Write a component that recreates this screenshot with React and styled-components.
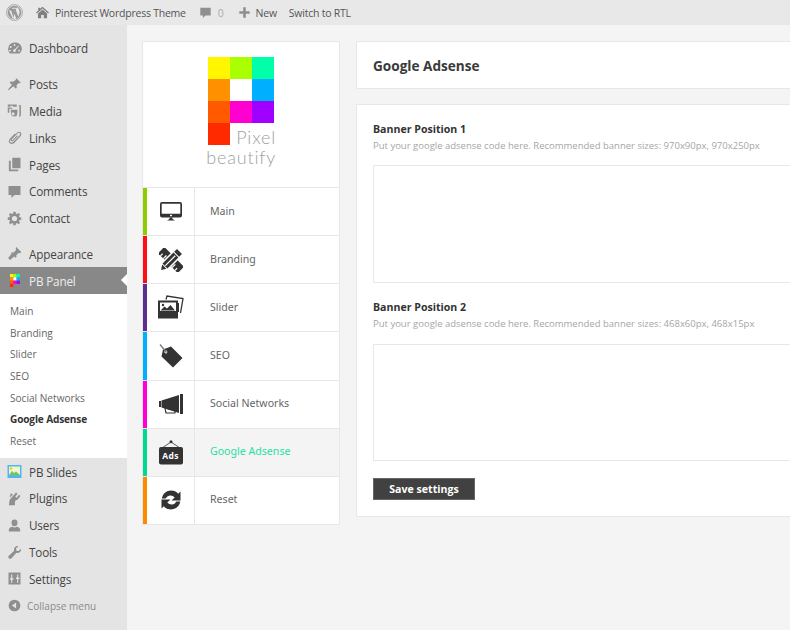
import React from "react";
import styled, { createGlobalStyle } from "styled-components";

const Global = createGlobalStyle`
  html, body { margin: 0; padding: 0; width: 790px; height: 630px; overflow: hidden; background: #f4f4f4; }
  * { box-sizing: border-box; }
  body { font-family: "Open Sans", "Liberation Sans", sans-serif; }
`;

const Page = styled.div`
  width: 790px; height: 630px; overflow: hidden; display: flex; flex-direction: column;
`;
const TopBar = styled.header`
  height: 25px; flex: none; background: #e8e8e8; display: flex; align-items: center;
  font-size: 10.5px; color: #555; padding-left: 6px;
`;
const TopItem = styled.span`
  display: inline-flex; align-items: center; gap: ${p => p.$gap ?? 6}px; margin-left: ${p => p.$ml ?? 0}px;
  color: ${p => p.$muted ? "#aaa" : "#555"}; letter-spacing: -0.23px; white-space: nowrap;
`;
const Body = styled.div`
  flex: 1; display: flex; min-height: 0;
`;
const Side = styled.nav`
  width: 127px; flex: none; background: #e4e4e4; padding-top: 10px; font-size: 11.7px; letter-spacing: -0.15px;
`;
const MenuItem = styled.div`
  height: 26.8px; display: flex; align-items: center; padding-left: 7px; gap: 7px;
  color: #444; margin-top: ${p => p.$mt ?? 0}px; white-space: nowrap;
`;
const IconBox = styled.span`
  width: 15px; height: 16px; display: inline-flex; align-items: center; justify-content: center; flex: none;
  color: #8f8f8f;
`;
const ActiveItem = styled(MenuItem)`
  position: relative; background: #888; color: #eee; height: 26.5px;
  &::after {
    content: ""; position: absolute; right: 0; top: 7px;
    border: 6px solid transparent; border-right-color: #fff; border-left-width: 0;
  }
`;
const SubMenu = styled.div`
  background: #fff; padding: 7px 0 5.6px 10px; display: flex; flex-direction: column; letter-spacing: 0;
`;
const SubItem = styled.div`
  height: 21.7px; line-height: 21px; font-size: 10.1px; white-space: nowrap;
  color: ${p => p.$current ? "#333" : "#666"}; font-weight: ${p => p.$current ? 700 : 400};
  letter-spacing: ${p => p.$current ? "-0.15px" : "0"};
`;
const Collapse = styled(MenuItem)`
  font-size: 10px; color: #8a8a8a; gap: 5px; letter-spacing: 0;
`;
const Main = styled.main`
  flex: 1; min-width: 0; display: flex; gap: 16px; padding: 16px 0 0 15px; align-items: flex-start;
`;
const Card = styled.section`
  background: #fff; border: 1px solid #e7e7e7;
`;
const NavCard = styled(Card)`
  width: 198px; flex: none;
`;
const LogoWrap = styled.div`
  height: 145px; padding: 15px 0 0 65px;
`;
const Logo = styled.div`
  display: grid; grid-template-columns: repeat(3, 22px); grid-auto-rows: 22px; width: 66px; position: relative;
`;
const Cell = styled.i`
  display: block; background: ${p => p.$c};
`;
const LogoText = styled.div`
  position: absolute; right: -2px; font-family: "Lato", sans-serif; font-weight: 300; color: #a0a0a0; white-space: nowrap;
  font-size: 18px; letter-spacing: 0.8px; line-height: 20px; top: ${p => p.$top}px;
`;
const NavRow = styled.div`
  height: 48.15px; display: flex; border-top: 1px solid #e7e7e7;
  background: ${p => p.$active ? "#f4f4f4" : "#fff"};
`;
const Stripe = styled.span`
  width: 4px; flex: none; background: ${p => p.$c};
`;
const NavIcon = styled.span`
  width: 48px; flex: none; border-right: 1px solid #e7e7e7; display: flex; align-items: center; justify-content: center;
  color: #333;
`;
const NavLabel = styled.span`
  padding: 0 0 2px 15px; display: flex; align-items: center; font-size: 10.6px; font-family: "Noto Sans", sans-serif;
  color: ${p => p.$active ? "#1fe0a5" : "#666"}; white-space: nowrap;
`;
const Column = styled.div`
  flex: 1; min-width: 0; display: flex; flex-direction: column; gap: 15px; margin-right: -20px;
`;
const Header = styled(Card)`
  height: 48px; display: flex; align-items: center; padding-left: 16px;
`;
const Title = styled.h1`
  margin: 0; font-size: 13.6px; font-weight: 700; color: #3a3a3a;
`;
const Form = styled(Card)`
  height: 413px; padding: 17px 16px 0;
`;
const FieldTitle = styled.h2`
  margin: 0; font-size: 10.6px; line-height: 14px; font-weight: 700; color: #333;
`;
const FieldHelp = styled.p`
  margin: 3px 0 0; font-size: 9.5px; line-height: 13px; color: #a6a6a6; white-space: nowrap;
`;
const Area = styled.div`
  margin: ${p => p.$mt}px 0 0; height: ${p => p.$h}px; background: #fff; border: 1px solid #e7e7e7;
`;
const Spaced = styled.div`
  margin-top: 17px;
`;
const SaveButton = styled.button`
  margin-top: 17px; width: 102px; height: 22px; border: 1px solid #666; background: #414141; color: #fff;
  font: 700 10.6px "Open Sans", sans-serif; padding: 0; display: block;
`;

const I = ({ children, s = 15, vb = 20 }) => (
  <svg width={s} height={s} viewBox={`0 0 ${vb} ${vb}`} fill="currentColor">{children}</svg>
);

const icons = {
  dash: <path d="M10 2a8.5 8.5 0 0 0-8.5 8.5c0 2.5 1 4.700 2.700 6.300h12.600A8.500 8.500 0 0 0 10 2zm0 2a1.300 1.300 0 1 1 0 2.600A1.300 1.300 0 0 1 10 4zM5 6.800a1.300 1.300 0 1 1 0 2.600 1.300 1.300 0 0 1 0-2.600zm9.800-.6.900.7-4.200 5a1.800 1.800 0 1 1-1-.8zM4 11.500a1.300 1.300 0 1 1 0 2.600 1.300 1.300 0 0 1 0-2.600zm12 0a1.300 1.300 0 1 1 0 2.600 1.300 1.300 0 0 1 0-2.600z" fillRule="evenodd"/>,
  pin: <path d="M12.500 1.500l6 6-1.500.7-1-.5-3.300 3.300.4 3.300-1.300 1.300-3.200-3.200-6.600 5.400-.8-.8 5.400-6.600-3.200-3.200 1.300-1.300 3.300.4L12 3.500l-.4-1z"/>,
  media: <path d="M1 2h12v3H8.500L7.500 3.800H5L4 5H1zm0 4h6v1.500H4a1 1 0 0 0-1 1V13H1zm4 3h9l-.5 6c0 2-1.500 3-4 3s-4-1.200-4-3zm10-6.500h2c1 0 1.500.5 1.500 1.500v12c0 1.500-1 2.500-2.500 2.500l.5-2V4zM9.500 13a2 2 0 1 0 0 3 2 2 0 0 0 0-3z" fillRule="evenodd"/>,
  link: <path d="M13.500 3.200c1.800-1.500 4-1 5 .2s.9 3.300-.5 5L10 17c-2 2-4.500 2.300-6.300.8S2 13.500 3.800 11.500l6.700-7 1 1-6.700 7c-1.200 1.400-1.300 2.800-.2 3.900s2.700.7 4-.6l8-8.500c.9-1.100 1.100-2.300.4-3s-2-.8-3 .2l-7.400 7.700c-.4.500-.5 1-.2 1.300s.8.200 1.200-.2l6-6.300 1 1-6 6.300c-1 1-2.300 1.200-3.200.3s-.8-2.200.2-3.300z"/>,
  pages: <path d="M7 1h11v14H7zM2.500 5H5v11.500h10V19H2.500z"/>,
  comment: <path d="M2 2.500h16v12H10l-4 4v-4H2z"/>,
  gear: <path d="M8.500 1h3l.4 2.500 1.500.6 2-1.500 2.100 2.100-1.500 2 .6 1.500 2.400.4v3l-2.400.4-.6 1.500 1.500 2-2.100 2.100-2-1.500-1.500.6-.4 2.300h-3l-.4-2.300-1.500-.6-2 1.500-2.100-2.100 1.500-2-.6-1.500L1 11.500v-3l2.400-.4.6-1.500-1.500-2 2.100-2.100 2 1.500 1.500-.6zM10 6.500a3.500 3.500 0 1 0 0 7 3.500 3.500 0 0 0 0-7z" fillRule="evenodd"/>,
  brush: <path d="M12 1l7 7-1.500 1.500-1.700-.6-3.600 3.600.6 1.800-1.500 1.500-6-6 1.500-1.500 1.800.6 3.600-3.600-.6-1.700zM6 10.500l3.500 3.500-5.500 4.500-2.500-2.500z"/>,
  plug: <path d="M12 2l2 1.500-3 4 2 1.500 3-4 2 1.500-3.500 4.500c-.7 1-1.700 1.300-2.700 1l-1.300 2.500v4.500H2.500l1-7.500zM3.500 9 8 4.500 5 3z"/>,
  user: <path d="M10 2a4 4.500 0 0 1 4 4.500C14 9 12.500 11 10 11S6 9 6 6.500A4 4.500 0 0 1 10 2zM2.500 15c1-2.500 3-3.500 4.500-3.500 1 .8 2 1 3 1s2-.2 3-1c1.500 0 3.500 1 4.500 3.500v3h-15z"/>,
  wrench: <path d="M18.500 5c.5 2-.3 4-2 5-1.500.8-3 .7-4 .3L6 17.500c-1 1-2.500 1-3.500 0s-1-2.300 0-3.300L9.600 7.500c-.4-1.200-.3-2.700.5-4C11 2 13 1.200 15 1.500L12 4.500l.5 3 3 .5z"/>,
  settings: <path d="M2 2h16v16H2zm3.500 2.500v5H4v2h1.500v4h1.500v-4h1.500v-2H7v-5zm8 0v4H12v2h1.500v5H15v-5h1.500v-2H15v-4z" fillRule="evenodd"/>,
  collapse: <path d="M10 1a9 9 0 1 1 0 18 9 9 0 0 1 0-18zm2.500 4.500L6 10l6.500 4.500z" fillRule="evenodd"/>,
};

const WpLogo = () => (
  <svg width="17" height="17" viewBox="0 0 20 20" fill="none">
    <circle cx="10" cy="10" r="9.300" stroke="#999" strokeWidth="1"/>
    <circle cx="10" cy="10" r="8" fill="#999"/>
    <path d="M3.500 7.500h2.500l3 9-1 .5zM6.500 5.500h6L11.500 7l3 8 1.500-5c.3-1.500-1-3-1-4l-1-1.500H8zM10 11.500l2 5.500-2 .5-1.500-.5z" fill="#e8e8e8"/>
  </svg>
);

const Home = () => (
  <svg width="13" height="13" viewBox="0 0 20 20" fill="#808080"><path d="M10 1l10 9-1.500 1.500L10 4 1.500 11.500 0 10l3.500-3V2.500h3V4.300zM10 5.500l7 6v7.500h-5v-5H8v5H3v-7.500z"/></svg>
);

const pbColors = ["#fff600", "#aaff00", "#00ffa8", "#ff9000", "#ffffff", "#00b0ff", "#ff5a00", "#ff00d0", "#a000ff", "#ff2a00"];

const MiniLogo = () => (
  <svg width="10" height="13" viewBox="0 0 10 13">
    {pbColors.map((c, i) => <rect key={i} x={(i % 3) * 3.300} y={Math.floor(i / 3) * 3.300} width="3.300" height="3.300" fill={c}/>)}
  </svg>
);

const SlidesIcon = () => (
  <svg width="15" height="15" viewBox="0 0 15 15">
    <rect x="0.500" y="1" width="14" height="13" fill="#4fb6f0"/>
    <rect x="2" y="2.500" width="11" height="8.500" fill="#eef7d0"/>
    <path d="M2 11l3-4 2 2 2-1.500L13 11z" fill="#7dc24a"/>
    <circle cx="4" cy="4.500" r="1.200" fill="#f5c518"/>
  </svg>
);

const navIcons = {
  Main: (
    <svg width="22" height="19" viewBox="0 0 22 19" fill="currentColor">
      <path fillRule="evenodd" d="M2 0h18a2 2 0 0 1 2 2v11.500a2 2 0 0 1-2 2H2a2 2 0 0 1-2-2V2a2 2 0 0 1 2-2zm-.3 1.800v10h18.600v-10z"/>
      <rect x="10" y="12.800" width="2" height="1.400" fill="#fff"/>
      <path d="M9.500 15.500h3v1.500l2.500 1.500H7L9.500 17z"/>
    </svg>
  ),
  Branding: (
    <svg width="24" height="24" viewBox="0 0 24 24">
      <g transform="rotate(-45 12 12)" fill="#333">
        <rect x="7.500" y="-2" width="9" height="28"/>
        <path d="M7.500 1h3v1.200h-3zM7.500 5h4.500v1.200H7.500zM7.500 17.500h4.500v1.200H7.500zM7.500 21.500h3v1.200h-3z" fill="#fff"/>
      </g>
      <g transform="rotate(45 12 12)">
        <path d="M7 1h10v19l-5 7-5-7z" fill="#fff"/>
        <path d="M8.500 0h7v4h-7zM8.500 5h7v15.500h-7zM9 21.500h6L12 26z" fill="#333"/>
        <path d="M11.400 6h1.200v14h-1.200z" fill="#fff"/>
      </g>
    </svg>
  ),
  Slider: (
    <svg width="26" height="25" viewBox="0 0 26 25" fill="none">
      <path d="M8 4.500 L9 1 25 3.500 22.500 18" stroke="currentColor" strokeWidth="1.300"/>
      <path d="M20 8v9" stroke="currentColor" strokeWidth="2"/>
      <path fillRule="evenodd" fill="currentColor" d="M0 5.500h20V23.500H0zM2 7.500V16h16V7.500z"/>
      <path fill="currentColor" d="M2.500 15.500l4-4 2.500 2 3.500-3.500 4.500 5.500z"/>
      <circle cx="5" cy="10" r="1.200" fill="currentColor"/>
    </svg>
  ),
  SEO: (
    <svg width="24" height="24" viewBox="0 0 24 24" fill="currentColor">
      <path fillRule="evenodd" d="M4 5.500 12 2.500 23.500 14 14 23.500 2.500 12.500zM6.800 6.500a1.500 1.500 0 1 0 .1 3 1.500 1.500 0 0 0-.1-3z"/>
      <path d="M1 .5 7.500 8.500" stroke="#777" strokeWidth="1.300" fill="none"/>
    </svg>
  ),
  "Social Networks": (
    <svg width="24" height="20" viewBox="0 0 24 20" fill="currentColor">
      <path d="M0 7h2v6H0zM2.500 6.500 20 1v18L2.500 13.500zM21 0h3v20h-3z"/>
      <path d="M6 14l10 2.500V19H7z" fill="none" stroke="currentColor" strokeWidth="1.200"/>
    </svg>
  ),
  "Google Adsense": (
    <svg width="26" height="25" viewBox="0 0 26 25" fill="none">
      <circle cx="13" cy="1.800" r="1.500" fill="currentColor"/>
      <path d="M13 2 4 8M13 2l9 6" stroke="currentColor" strokeWidth="0.800"/>
      <rect x="1" y="7" width="24" height="17.500" rx="2" fill="currentColor"/>
    </svg>
  ),
  Reset: (
    <svg width="24" height="24" viewBox="0 0 24 24" fill="currentColor">
      <path d="M12 2.500a9.500 9.500 0 0 1 7.200 3.300L21.500 3.500v9h-9l3.200-3.100A5.500 5.500 0 0 0 6.600 10.500H2.700A9.500 9.500 0 0 1 12 2.500zM2.500 11.500h9l-3.200 3.100a5.500 5.500 0 0 0 9.100-1.100h3.900A9.500 9.500 0 0 1 4.800 18.200L2.500 20.500z"/>
    </svg>
  ),
};

const AdsWord = styled.span`
  position: absolute; left: 0; right: 0; bottom: 4px; text-align: center; color: #fff; font: 700 8.500px "Open Sans", sans-serif; letter-spacing: 0.300px;
`;
const AdsHolder = styled.span`
  position: relative; display: inline-flex;
`;

const nav = [
  ["Main", "#8ccf00"], ["Branding", "#ff0f14"], ["Slider", "#5e2d91"], ["SEO", "#00b0ff"],
  ["Social Networks", "#ff00d4"], ["Google Adsense", "#00d992", true], ["Reset", "#ff8a00"],
];

const Side1 = [["Dashboard", "dash", 0]];
const Side2 = [["Posts", "pin", 9], ["Media", "media", 0], ["Links", "link", 0], ["Pages", "pages", 0], ["Comments", "comment", 0], ["Contact", "gear", 0], ["Appearance", "brush", 9]];
const Side3 = [["Plugins", "plug"], ["Users", "user"], ["Tools", "wrench"], ["Settings", "settings"]];

const MItem = ({ name, icon, mt }) => (
  <MenuItem $mt={mt}><IconBox><I>{icons[icon]}</I></IconBox>{name}</MenuItem>
);

export default function App() {
  return (
    <Page>
      <Global />
      <TopBar>
        <WpLogo />
        <TopItem $ml={13}><Home />Pinterest Wordpress Theme</TopItem>
        <TopItem $ml={12} $muted $gap={5}><IconBox><I s={13}>{icons.comment}</I></IconBox>0</TopItem>
        <TopItem $ml={13} $gap={4}><IconBox><I s={13}><path d="M8 2h4v6h6v4h-6v6H8v-6H2V8h6z"/></I></IconBox>New</TopItem>
        <TopItem $ml={12}>Switch to RTL</TopItem>
      </TopBar>
      <Body>
        <Side>
          {Side1.map(([n, i, m]) => <MItem key={n} name={n} icon={i} mt={m} />)}
          {Side2.map(([n, i, m]) => <MItem key={n} name={n} icon={i} mt={m} />)}
          <ActiveItem><IconBox><MiniLogo /></IconBox>PB Panel</ActiveItem>
          <SubMenu>
            <SubItem>Main</SubItem>
            <SubItem>Branding</SubItem>
            <SubItem>Slider</SubItem>
            <SubItem>SEO</SubItem>
            <SubItem>Social Networks</SubItem>
            <SubItem $current>Google Adsense</SubItem>
            <SubItem>Reset</SubItem>
          </SubMenu>
          <MenuItem><IconBox><SlidesIcon /></IconBox>PB Slides</MenuItem>
          {Side3.map(([n, i]) => <MItem key={n} name={n} icon={i} />)}
          <Collapse><IconBox><I s={13}>{icons.collapse}</I></IconBox>Collapse menu</Collapse>
        </Side>
        <Main>
          <NavCard>
            <LogoWrap>
              <Logo>
                {pbColors.map((c, i) => <Cell key={i} $c={c} />)}
                <LogoText $top={70}>Pixel</LogoText>
                <LogoText $top={90}>beautify</LogoText>
              </Logo>
            </LogoWrap>
            {nav.map(([n, c, a]) => (
              <NavRow key={n} $active={a}>
                <Stripe $c={c} />
                <NavIcon>
                  {n === "Google Adsense"
                    ? <AdsHolder>{navIcons[n]}<AdsWord>Ads</AdsWord></AdsHolder>
                    : navIcons[n]}
                </NavIcon>
                <NavLabel $active={a}>{n}</NavLabel>
              </NavRow>
            ))}
          </NavCard>
          <Column>
            <Header><Title>Google Adsense</Title></Header>
            <Form>
              <FieldTitle>Banner Position 1</FieldTitle>
              <FieldHelp>Put your google adsense code here. Recommended banner sizes: 970x90px, 970x250px</FieldHelp>
              <Area $mt={13} $h={118} />
              <Spaced>
                <FieldTitle>Banner Position 2</FieldTitle>
                <FieldHelp>Put your google adsense code here. Recommended banner sizes: 468x60px, 468x15px</FieldHelp>
              </Spaced>
              <Area $mt={14} $h={117} />
              <SaveButton>Save settings</SaveButton>
            </Form>
          </Column>
        </Main>
      </Body>
    </Page>
  );
}
